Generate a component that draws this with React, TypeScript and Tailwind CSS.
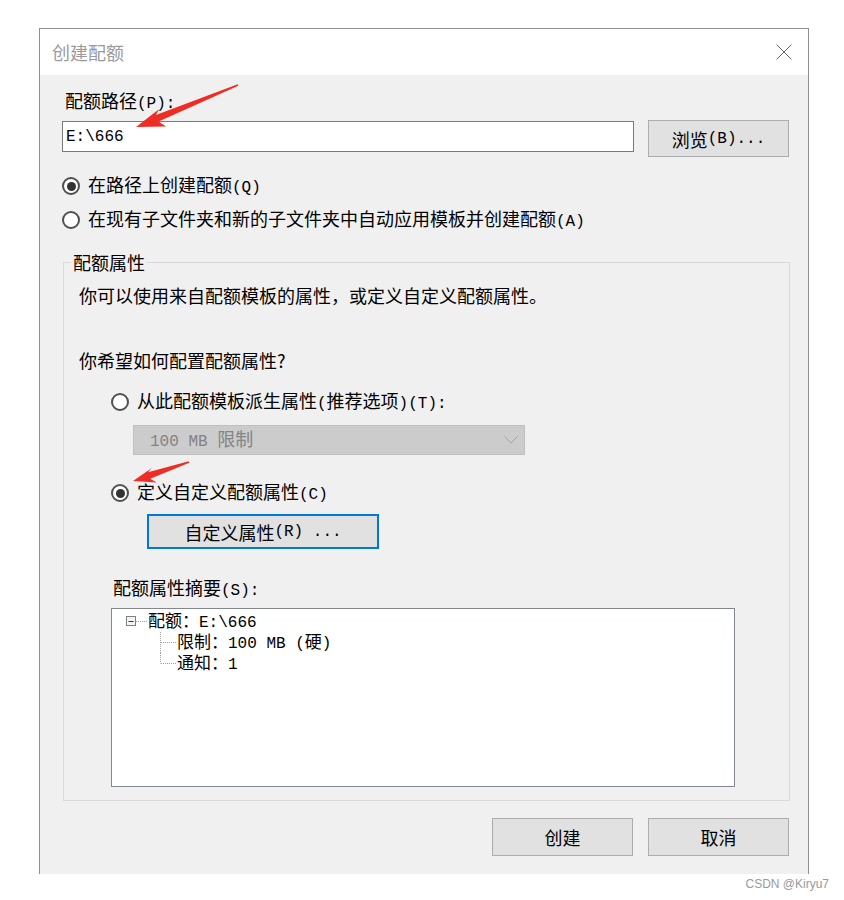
import React from "react";

// half-width ascii, like the dialog's bitmap font
function A({ children }: { children: React.ReactNode }) {
  return <span className="font-['Liberation_Mono',monospace] text-[16px]">{children}</span>;
}

function Radio({ checked, children, className = "" }: { checked?: boolean; children: React.ReactNode; className?: string }) {
  return (
    <label className={"flex h-6 items-center gap-[8px] leading-6 " + className}>
      <span className="flex h-[18px] w-[18px] shrink-0 items-center justify-center rounded-full border-2 border-[#505050] bg-white">
        {checked && <span className="h-[9px] w-[9px] rounded-full bg-[#333]" />}
      </span>
      <span>{children}</span>
    </label>
  );
}

function Arrow({ x1, y1, x2, y2, head = 24, wing = 9 }: { x1: number; y1: number; x2: number; y2: number; head?: number; wing?: number }) {
  const L = Math.hypot(x2 - x1, y2 - y1);
  const ang = (Math.atan2(y2 - y1, x2 - x1) * 180) / Math.PI;
  const pts = [
    [0, -0.8],
    [L - head + 5, -3.5],
    [L - head, -wing],
    [L, 0],
    [L - head, wing * 0.7],
    [L - head + 5, 3.5],
    [0, 0.8],
  ]
    .map((p) => p.join(","))
    .join(" ");
  return <polygon points={pts} fill="#ee2d24" transform={`translate(${x1} ${y1}) rotate(${ang})`} />;
}

const App = () => {
  return (
    <div className="relative min-h-[900px] bg-white pt-[28px] font-['Noto_Sans_CJK_SC',sans-serif] text-[18px] text-black">
      <div className="ml-[39px] flex h-[846px] w-[770px] flex-col border-x border-t border-[#8f8f8f]">
        <div className="flex h-[46px] items-center justify-between bg-white pl-[12px] pr-[16px]">
          <span className="text-[18px] leading-6 text-[#9a9a9a]">创建配额</span>
          <svg width="16" height="16" viewBox="0 0 16 16">
            <path d="M0.5 0.5 L15.5 15.5 M15.5 0.5 L0.5 15.5" stroke="#666" strokeWidth="1" fill="none" />
          </svg>
        </div>

        <div className="flex-1 bg-[#f0f0f0] pl-[22px] pr-[19px] pt-[13px]">
          <div className="ml-[3px] h-6 leading-6">
            配额路径<A>(P):</A>
          </div>
          <div className="mt-2 flex items-start gap-[14px]">
            <div className="mt-[1px] flex h-[31px] flex-1 items-center border border-[#7a7a7a] bg-white px-[3px]">
              <A>E:\666</A>
            </div>
            <button className="flex h-[37px] w-[141px] items-center justify-center border border-[#adadad] bg-[#e1e1e1] leading-6">
              浏览<A>(B)...</A>
            </button>
          </div>

          <Radio checked className="mt-[17px]">
            在路径上创建配额<A>(Q)</A>
          </Radio>
          <Radio className="mt-[10px]">
            在现有子文件夹和新的子文件夹中自动应用模板并创建配额<A>(A)</A>
          </Radio>

          <fieldset className="-mr-[1px] ml-[1px] mt-[18px] border border-[#d9d9d9] pb-[13px] pl-[15px]">
            <legend className="-ml-[8px] h-6 px-[2px] leading-6">配额属性</legend>
            <p className="mt-[9px] h-6 leading-6">你可以使用来自配额模板的属性，或定义自定义配额属性。</p>
            <p className="mt-[41px] h-6 leading-6">你希望如何配置配额属性?</p>

            <Radio className="ml-[32px] mt-[18px]">
              从此配额模板派生属性<A>(</A>推荐选项<A>)(T):</A>
            </Radio>
            <div className="ml-[54px] mt-[11px] flex h-[30px] w-[392px] items-center justify-between border border-[#bfbfbf] bg-[#cccccc] pl-[16px] pr-[6px] leading-6 text-[#838383]">
              <span>
                <A>100 MB </A>限制
              </span>
              <svg width="14" height="8" viewBox="0 0 14 8">
                <path d="M0.5 0.5 L7 7 L13.5 0.5" stroke="#a3a3a3" strokeWidth="1" fill="none" />
              </svg>
            </div>

            <Radio checked className="ml-[32px] mt-[26px]">
              定义自定义配额属性<A>(C)</A>
            </Radio>
            <button className="ml-[68px] mt-[9px] flex h-[35px] w-[232px] items-center justify-center border-2 border-[#0078d7] bg-[#e1e1e1] leading-6">
              自定义属性<A>(R) ...</A>
            </button>

            <div className="ml-[34px] mt-[26px] h-6 leading-6">
              配额属性摘要<A>(S):</A>
            </div>
            <div className="ml-[32px] mt-[9px] h-[179px] w-[624px] border border-[#828790] bg-white pt-[2px] text-[17px]">
              <div className="flex h-[21px] items-center">
                <svg width="36" height="21" viewBox="0 0 36 21" className="shrink-0">
                  <rect x="14.5" y="5.5" width="9" height="9" fill="#f4f4f4" stroke="#7f8080" />
                  <path d="M16.5 10.5 H21.5" stroke="#1f3d7a" />
                  <path d="M24 10.5 H35" stroke="#a0a0a0" strokeDasharray="1 1" />
                </svg>
                <span className="leading-[21px]">
                  配额：<A>E:\666</A>
                </span>
              </div>
              <div className="flex h-[21px] items-center">
                <svg width="65" height="21" viewBox="0 0 65 21" className="shrink-0">
                  <path d="M48.5 0 V21 M49 10.5 H64" stroke="#a0a0a0" strokeDasharray="1 1" />
                </svg>
                <span className="leading-[21px]">
                  限制：<A>100 MB (</A>硬<A>)</A>
                </span>
              </div>
              <div className="flex h-[21px] items-center">
                <svg width="65" height="21" viewBox="0 0 65 21" className="shrink-0">
                  <path d="M48.5 0 V10.5 M49 10.5 H64" stroke="#a0a0a0" strokeDasharray="1 1" />
                </svg>
                <span className="leading-[21px]">
                  通知：<A>1</A>
                </span>
              </div>
            </div>
          </fieldset>

          <div className="mt-[17px] flex justify-end gap-[15px]">
            <button className="flex h-[38px] w-[141px] items-center justify-center border border-[#adadad] bg-[#e1e1e1] leading-6">
              创建
            </button>
            <button className="flex h-[38px] w-[141px] items-center justify-center border border-[#adadad] bg-[#e1e1e1] leading-6">
              取消
            </button>
          </div>
        </div>
      </div>
      <div className="pr-[15px] pt-[2px] text-right font-['Liberation_Sans',sans-serif] text-[12px] leading-4 text-[#9a9a9a]">
        CSDN @Kiryu7
      </div>

      <svg className="pointer-events-none absolute left-0 top-0" width="844" height="900">
        <Arrow x1={238} y1={85} x2={136} y2={127} head={28} wing={11} />
        <Arrow x1={189} y1={462} x2={133} y2={481} head={22} wing={9} />
      </svg>
    </div>
  );
};

export default App;
